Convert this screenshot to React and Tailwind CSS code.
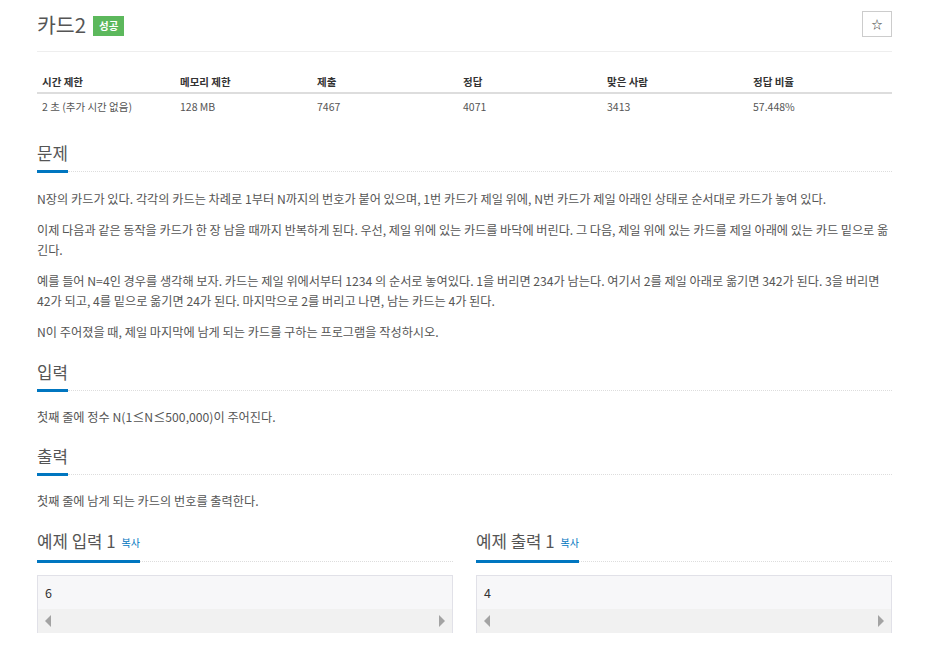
import React from 'react';

const font = { fontFamily: '"Noto Sans CJK KR", "Noto Sans", sans-serif' };

// Section heading with blue underline and dotted rest line.
const Heading = ({ children, extra }) => (
  <div className="flex items-end">
    <div className="border-b-[3px] border-[#0076c0] pb-[4px] text-[16.8px] leading-[26px] text-[#555] whitespace-nowrap">
      {children}
      {extra}
    </div>
    <div className="flex-1 border-b border-dotted border-[#ddd] mb-[1px]" />
  </div>
);

const Copy = () => <span className="ml-[6px] text-[10px] text-[#0076c0] align-middle">복사</span>;

const SampleBox = ({ value }) => (
  <div className="mt-[12px] border border-[#e1e1e8] border-b-0">
    <div className="bg-[#f7f7f9] px-[7px] h-[33px] flex items-center text-[12.5px] text-[#333]">{value}</div>
    <div className="bg-[#f1f1f1] h-[24px] flex items-center justify-between px-[7px]">
      <span className="w-0 h-0 border-y-[6px] border-y-transparent border-r-[6px] border-r-[#a3a3a3]" />
      <span className="w-0 h-0 border-y-[6px] border-y-transparent border-l-[6px] border-l-[#a3a3a3]" />
    </div>
  </div>
);

const cols = ['w-[138px]', 'w-[137px]', 'w-[146px]', 'w-[144px]', 'w-[146px]', 'flex-1'];

export default function App() {
  const head = ['시간 제한', '메모리 제한', '제출', '정답', '맞은 사람', '정답 비율'];
  const row = ['2 초 (추가 시간 없음)', '128 MB', '7467', '4071', '3413', '57.448%'];

  return (
    <div className="min-h-screen bg-white" style={font}>
      <div className="w-[855px] ml-[37px] text-[#555]">
        {/* Title */}
        <div className="flex items-center justify-between pt-[11px] pb-[14px] border-b border-[#eee]">
          <div className="flex items-center">
            <h1 className="text-[20.5px] leading-[26px] text-[#555]">카드2</h1>
            <span className="ml-[7px] mt-[3px] bg-[#5cb85c] text-white text-[10.5px] font-bold px-[6px] h-[20px] flex items-center">성공</span>
          </div>
          <button className="w-[30px] h-[26px] border border-[#ccc] flex items-center justify-center text-[11px] text-[#333]">☆</button>
        </div>

        {/* Info table */}
        <div className="mt-[19px] text-[10.5px]">
          <div className="flex border-b-2 border-[#ddd] h-[23px] items-center">
            {head.map((h, i) => (
              <div key={i} className={`${cols[i]} pl-[5px] font-bold text-[#333]`}>{h}</div>
            ))}
          </div>
          <div className="flex h-[26px] items-center">
            {row.map((r, i) => (
              <div key={i} className={`${cols[i]} pl-[5px] text-[#555]`}>{r}</div>
            ))}
          </div>
        </div>

        {/* Problem */}
        <div className="mt-[20px]">
          <Heading>문제</Heading>
          <div className="text-[12.2px] leading-[20.5px] text-[#555] mt-[16px]">
            <p className="mb-[10px]">N장의 카드가 있다. 각각의 카드는 차례로 1부터 N까지의 번호가 붙어 있으며, 1번 카드가 제일 위에, N번 카드가 제일 아래인 상태로 순서대로 카드가 놓여 있다.</p>
            <p className="mb-[10px] tracking-[-0.04px] break-all">이제 다음과 같은 동작을 카드가 한 장 남을 때까지 반복하게 된다. 우선, 제일 위에 있는 카드를 바닥에 버린다. 그 다음, 제일 위에 있는 카드를 제일 아래에 있는 카드 밑으로 옮긴다.</p>
            <p className="mb-[10px]">예를 들어 N=4인 경우를 생각해 보자. 카드는 제일 위에서부터 1234 의 순서로 놓여있다. 1을 버리면 234가 남는다. 여기서 2를 제일 아래로 옮기면 342가 된다. 3을 버리면 42가 되고, 4를 밑으로 옮기면 24가 된다. 마지막으로 2를 버리고 나면, 남는 카드는 4가 된다.</p>
            <p>N이 주어졌을 때, 제일 마지막에 남게 되는 카드를 구하는 프로그램을 작성하시오.</p>
          </div>
        </div>

        {/* Input */}
        <div className="mt-[17px]">
          <Heading>입력</Heading>
          <p className="text-[12.2px] leading-[21px] mt-[15px]">첫째 줄에 정수 N(1≤N≤500,000)이 주어진다.</p>
        </div>

        {/* Output */}
        <div className="mt-[15px]">
          <Heading>출력</Heading>
          <p className="text-[12.2px] leading-[21px] mt-[15px]">첫째 줄에 남게 되는 카드의 번호를 출력한다.</p>
        </div>

        {/* Samples */}
        <div className="mt-[16px] flex gap-[23px]">
          <div className="flex-1">
            <Heading extra={<Copy />}>예제 입력 1</Heading>
            <SampleBox value="6" />
          </div>
          <div className="flex-1">
            <Heading extra={<Copy />}>예제 출력 1</Heading>
            <SampleBox value="4" />
          </div>
        </div>
      </div>
    </div>
  );
}
